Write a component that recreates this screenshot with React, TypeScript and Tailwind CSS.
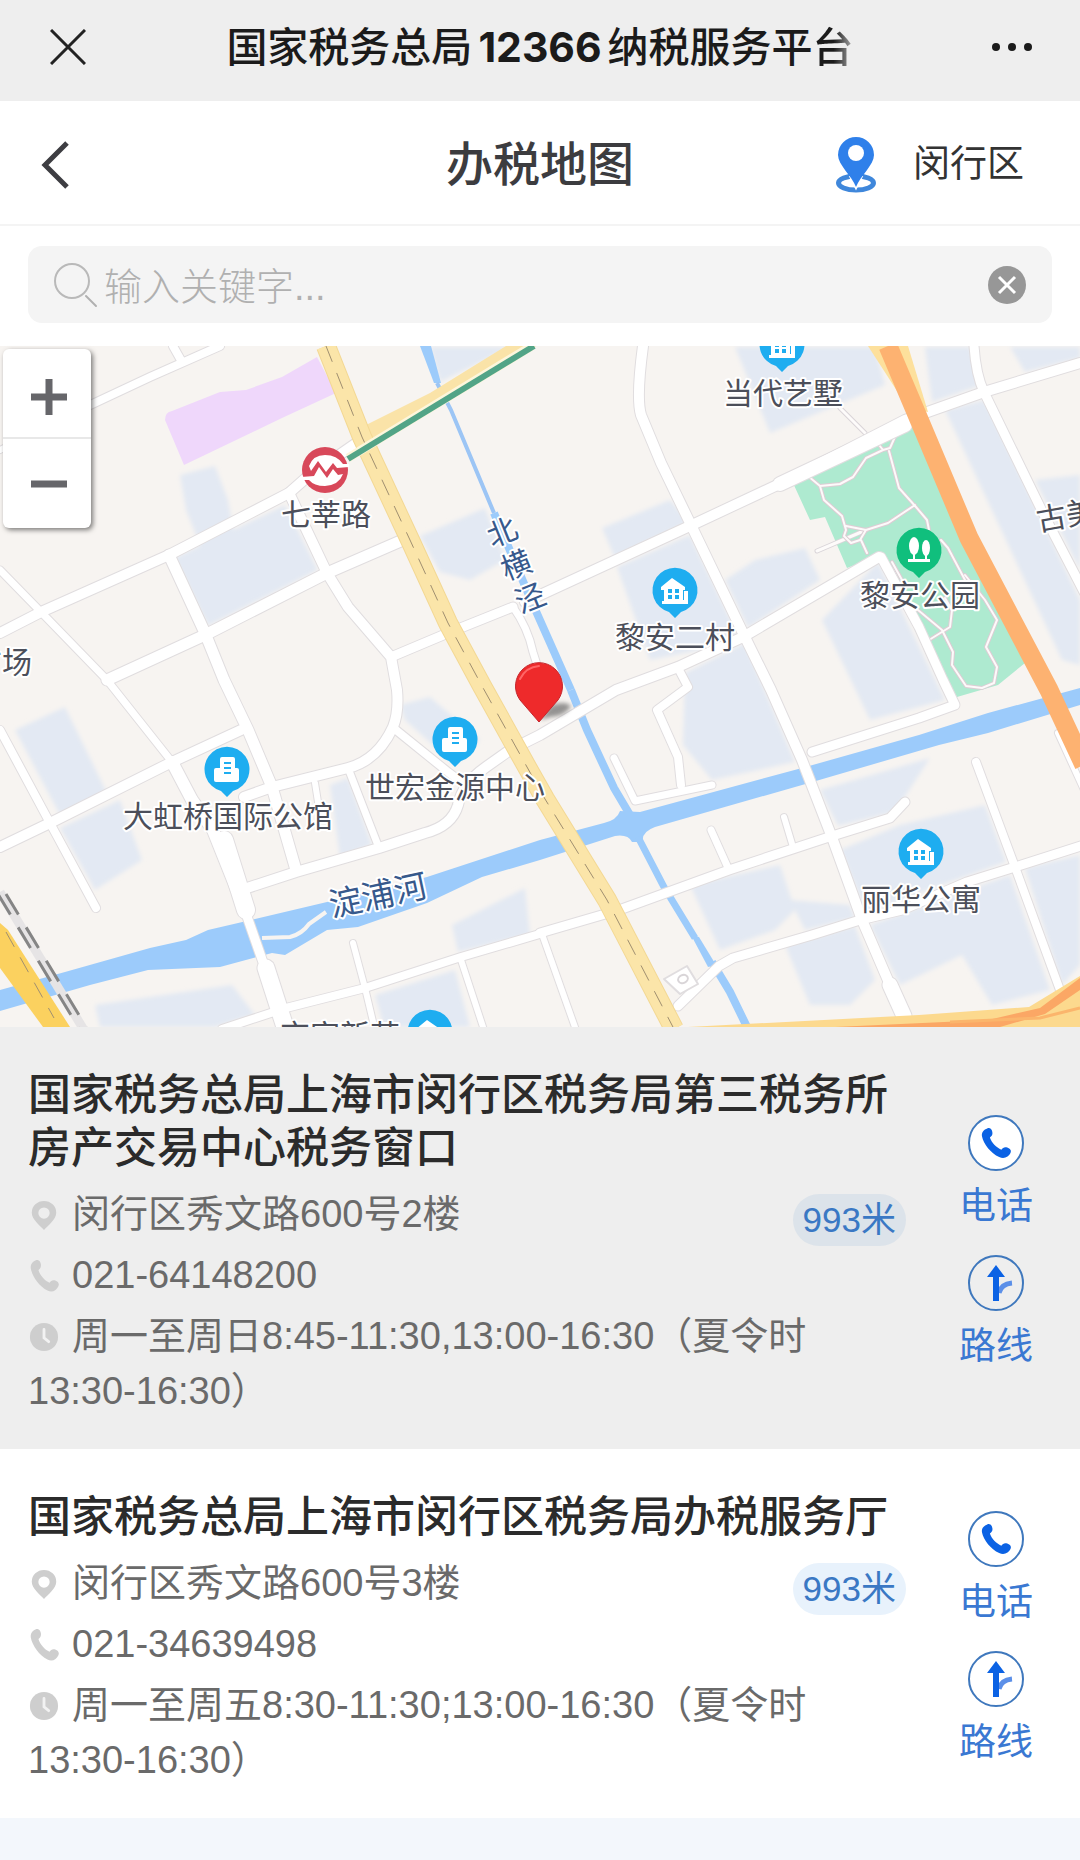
import React from "react";

const SANS = "font-['Liberation_Sans','Noto_Sans_CJK_SC',sans-serif]";

type Road = { d: string; w: number };

const roads: Road[] = [
  { d: "M86 407 L150 377 L220 346", w: 8 },
  { d: "M173 346 L182 362", w: 8 },
  { d: "M0 450 L8 446", w: 6 },
  { d: "M0 633 L41 612 L169 555 L289 493 L306 478 L358 442", w: 10 },
  { d: "M0 570 L41 612 L107 680 L172 762", w: 7 },
  { d: "M172 762 L192 800 L213 830 L243 905", w: 12 },
  { d: "M224 840 L246 910", w: 18 },
  { d: "M243 905 L265 968", w: 9 },
  { d: "M266 968 L285 1027", w: 17 },
  { d: "M169 555 L205 633 L224 680 L248 730 L272 787 L296 870", w: 11 },
  { d: "M107 680 L205 635 L327 573 L403 540", w: 11 },
  { d: "M289 493 L327 573 L348 607 L391 657 L397 690 Q399 712 393 727 Q378 760 348 768 L272 787 L244 797", w: 10 },
  { d: "M391 657 L448 633 L513 607", w: 9 },
  { d: "M513 607 Q528 628 533 652 L545 690", w: 7 },
  { d: "M525 602 L692 525 L788 480 L905 420 L984 392 L1080 363", w: 10 },
  { d: "M780 484 L905 425", w: 14 },
  { d: "M643 346 Q636 398 641 415 L661 463 L692 527 L743 633 L771 690 L802 760 L833 840 L862 920 L890 985", w: 10 },
  { d: "M890 985 L904 1016", w: 15 },
  { d: "M974 346 Q976 375 984 392 L1043 513 L1084 592", w: 9 },
  { d: "M812 752 L919 718 L955 705 L943 680 L919 627 L881 557", w: 9 },
  { d: "M879 557 L743 637 L678 667 L616 690 L540 735 L510 750 L486 767 Q462 784 458 805 Q452 826 425 833 L379 848 L296 872 L241 890", w: 10 },
  { d: "M678 668 L688 687 L657 710 L678 757 L681 785", w: 8 },
  { d: "M614 758 L635 801 L712 785", w: 7 },
  { d: "M540 933 L619 910 L729 870 L829 837 L890 818 L905 802", w: 9 },
  { d: "M711 830 L729 870", w: 7 },
  { d: "M784 817 L793 847", w: 6 },
  { d: "M543 933 L461 957 L365 988 L286 1008 L222 1029", w: 8 },
  { d: "M353 943 L365 988 L375 1030", w: 6 },
  { d: "M461 960 L484 1030", w: 6 },
  { d: "M543 937 L576 1030", w: 6 },
  { d: "M1084 845 L1015 867 L967 882 L902 910 L860 920 L812 935 L733 958 L719 966 L678 1006", w: 9 },
  { d: "M976 762 L1015 867 L1060 990", w: 8 },
  { d: "M1058 733 L1084 790", w: 6 },
  { d: "M0 730 L50 823 L96 908", w: 8 },
  { d: "M0 847 L50 823 L172 762 L241 730", w: 10 },
  { d: "M315 783 L318 802", w: 6 },
  { d: "M348 768 L379 848", w: 7 },
  { d: "M396 730 L448 772 L472 790", w: 8 },
];

const blocks: string[] = [
  "M180 475 L215 466 L228 500 L236 545 L200 545 L186 510Z",
  "M174 558 L285 505 L318 570 L208 626Z",
  "M430 347 L512 347 L440 382Z",
  "M420 536 L485 508 L505 560 L470 580 L440 572Z",
  "M15 730 L65 707 L108 795 L60 815Z",
  "M60 828 L120 800 L142 860 L95 890Z",
  "M400 705 L430 697 L480 740 L455 765 L405 720Z",
  "M330 785 L348 778 L372 845 L340 858Z",
  "M452 925 L525 888 L530 935 L458 952Z",
  "M95 1005 L232 985 L255 1015 L215 1027 L100 1027Z",
  "M375 995 L455 970 L470 1027 L384 1027Z",
  "M735 347 L875 347 L885 385 L770 433Z",
  "M602 528 L670 500 L690 522 L615 558Z",
  "M617 567 L690 535 L738 635 L700 650 L650 660Z",
  "M725 580 L755 560 L805 548 L820 580 L748 628Z",
  "M822 620 L878 562 L945 700 L870 720Z",
  "M685 673 L745 643 L795 762 L712 780 L683 745Z",
  "M925 347 L970 347 L982 385 L932 402Z",
  "M1010 347 L1080 347 L1080 358 L1025 372Z",
  "M945 410 L985 400 L1080 600 L1080 665 L1062 660Z",
  "M1035 480 L1080 475 L1080 570Z",
  "M820 790 L930 758 L895 812 L838 826Z",
  "M840 850 L900 825 L985 805 L1006 862 L866 912Z",
  "M690 885 L780 865 L795 910 L775 930 L720 950Z",
  "M790 900 L850 905 L855 918 L805 930Z",
  "M785 945 L855 926 L875 980 L850 1005 L810 1005Z",
  "M870 925 L1010 875 L1050 990 L992 1005 L962 955 L900 985Z",
  "M1025 868 L1080 855 L1080 965 L1062 985Z",
];

function Marker({ x, y, kind }: { x: number; y: number; kind: "house" | "tower" | "trees" }) {
  return (
    <g transform={`translate(${x} ${y})`}>
      <path
        d="M0 27 L-6 21 A22.500 22.500 0 1 1 6 21Z"
        fill={kind === "trees" ? "#10bf7d" : "#1eadf0"}
      />
      {kind === "house" && (
        <g>
          <path d="M-14 -4 L-3 -13 L10 -4 V-1 H8 V9 H9 V0 H13 V13 H-13 V10 H-11 V-1 H-14Z" fill="#fff" />
          <path d="M-7 -2h4v4h-4z M0 -2h4v4h-4z M-7 4h4v4h-4z M0 4h4v4h-4z" fill="#1eadf0" />
        </g>
      )}
      {kind === "tower" && (
        <g>
          <path d="M-7 -11 Q-7 -13 -5 -13 H6 Q8 -13 8 -11 V-2 H10 Q12 -2 12 0 V10 Q12 12 10 12 H-11 Q-13 12 -13 10 V0 Q-13 -2 -11 -2 H-7Z" fill="#fff" />
          <path d="M-3 -7h7 M-3 -2h7 M-3 3h7" stroke="#1eadf0" strokeWidth="2" />
        </g>
      )}
      {kind === "trees" && (
        <g fill="#fff">
          <ellipse cx="-5" cy="-5" rx="5" ry="9" />
          <ellipse cx="7" cy="-3" rx="4" ry="8" />
          <path d="M-6 2h2v7h-2z M6 2h2v7h-2z M-11 8h22v3h-22z" />
        </g>
      )}
    </g>
  );
}

const labels = [
  { t: "当代艺墅", x: 783, y: 404 },
  { t: "七莘路", x: 326, y: 525 },
  { t: "黎安二村", x: 675, y: 648 },
  { t: "黎安公园", x: 920, y: 606 },
  { t: "广场", x: 2, y: 673 },
  { t: "大虹桥国际公馆", x: 228, y: 827 },
  { t: "世宏金源中心", x: 455, y: 798 },
  { t: "丽华公寓", x: 921, y: 910 },
  { t: "京家新苑", x: 340, y: 1046 },
];

const MAIN_ROAD = "M326 346 L362 437 L410 540 L448 623 L482 686 L527 767 L545 799 L607 900 L674 1029";

const PARK_PATHS =
  "M876 441 L883 450 L890 448 L898 430 M889 451 L899 488 L916 507 L927 520 L929 530 M883 450 L866 458 L853 477 L840 484 L820 486 L808 476 M820 486 L824 500 L842 516 L846 530 L844 536 L851 543 L860 540 L866 530 L846 526 M866 530 L888 523 L915 505 M861 540 L867 553 M941 540 L948 548 L965 580 M965 575 L985 600 L997 620 L986 647 L997 667 L994 683 L982 688 L966 686 L952 665 L953 652 L942 630 L918 610 M929 640 L950 627 L952 610 L945 598 M892 562 L902 580";

function MapCanvas() {
  return (
    <svg viewBox="0 346 1080 681" className={`block h-auto w-full ${SANS}`} role="img" aria-label="办税地图">
      <defs>
        <filter id="pinShadow" x="-50%" y="-50%" width="200%" height="200%">
          <feGaussianBlur stdDeviation="2" />
        </filter>
        <filter id="blockEdge" x="-10%" y="-10%" width="120%" height="120%">
          <feGaussianBlur stdDeviation="2" />
        </filter>
      </defs>
      <rect x="0" y="346" width="1080" height="681" fill="#f7f4f1" />
      <g fill="#e3e9f3" filter="url(#blockEdge)">
        {blocks.map((d) => (
          <path key={d} d={d} />
        ))}
      </g>
      <path d="M165 420 Q165 412 172 411 L220 392 L246 390 L282 377 L317 357 L336 393 L282 418 L184 465Z" fill="#efd7fb" />
      <path d="M793 483 L905 424 L914 420 L1025 663 L998 685 L957 697 L929 650 L895 570 L881 555 L847 568 L825 517 L810 520Z" fill="#aeead0" />

      <g fill="#9ccbfb">
        <path d="M0 990 L65 972 L150 948 L186 940 L208 930 L251 920 L327 902 L427 877 L540 840 L604 823 Q617 820 620 811 L640 812 L802 768 L919 735 L988 713 L1080 688 V705 L988 733 L939 745 L809 783 L655 827 Q641 832 643 842 L632 842 Q628 834 615 836 L540 860 L482 877 L427 903 L358 927 L327 930 L285 955 L272 953 L220 967 L148 970 L90 985 L0 1011Z" />
        <path d="M420 346 L431 346 L441 383 L434 383Z" />
        <path d="M691 935 L699 937 L716 965 L708 967Z" />
      </g>
      <path d="M437 383 L451 410 L494 513" fill="none" stroke="#9cc5f5" strokeWidth="4" />
      <path d="M494 513 L531 600 L571 690" fill="none" stroke="#9ccbfb" strokeWidth="8" />
      <path d="M571 690 L587 730 L614 788 L630 815" fill="none" stroke="#9ccbfb" strokeWidth="8" />
      <path d="M638 837 L664 887 L695 938" fill="none" stroke="#9ccbfb" strokeWidth="7" />
      <path d="M712 962 L730 992 L748 1029" fill="none" stroke="#9ccbfb" strokeWidth="8" />
      <path d="M262 938 L290 937 Q302 934 309 924 L326 912" fill="none" stroke="#f7f4f1" strokeWidth="4" />

      <g fill="none" strokeLinecap="round" strokeLinejoin="round">
        <path d="M840 408 L865 433 M817 551 L866 530" stroke="#d9d4d8" strokeWidth="5" />
        <path d="M840 408 L865 433 M817 551 L866 530" stroke="#fdfbfa" strokeWidth="3" />
        <path d={PARK_PATHS} stroke="#dccdd4" strokeWidth="4" />
        <path d={PARK_PATHS} stroke="#fdfafa" strokeWidth="2" />
        {roads.map((r) => (
          <path key={r.d} d={r.d} stroke="#e0dddf" strokeWidth={r.w + 2} />
        ))}
        {roads.map((r) => (
          <path key={r.d} d={r.d} stroke="#fff" strokeWidth={r.w} />
        ))}
        <path d="M664 979 L687 966 L698 984 L680 994Z" fill="#fff" stroke="#e0dddf" strokeWidth="2" />
        <ellipse cx="683" cy="979" rx="5" ry="4" stroke="#d9d5d8" strokeWidth="2" transform="rotate(-25 683 979)" />
      </g>

      <path d="M362 427 L430 393 L506 346 L536 346 L372 448Z" fill="#fae3a8" />
      <path d={MAIN_ROAD} fill="none" stroke="#f3d894" strokeWidth="20" />
      <path d={MAIN_ROAD} fill="none" stroke="#fbe5a9" strokeWidth="18" />
      <path d={MAIN_ROAD} fill="none" stroke="#a08f70" strokeWidth="1" strokeDasharray="17 12" />
      <path d="M348 458 L532 346" stroke="#fdf6dc" strokeWidth="9" />
      <path d="M348 459 L534 346" stroke="#52a487" strokeWidth="6" />

      <path d="M868 346 L908 346 L928 412 L908 408Z" fill="#fde09c" />
      <path d="M888 346 L918 417 L969 538 L1049 690 L1084 765" fill="none" stroke="#fdb271" strokeWidth="19" strokeLinejoin="round" />

      <path d="M688 1027 L919 1015 L1029 1007 L1080 976 V1027Z" fill="#fcd98e" />
      <path d="M835 1027 L988 1020 L1040 1008 L1080 978 V990 L1045 1014 L1000 1027Z" fill="#fba765" />
      <path d="M950 1022 L1040 1018 L1080 1008" fill="none" stroke="#fbb56c" strokeWidth="3" />

      <path d="M0 923 L8 930 L70 1027 L43 1027 L0 968Z" fill="#fbd15f" />
      <path d="M6 932 L54 1018" stroke="#a08f70" strokeWidth="1" strokeDasharray="17 12" />
      <path d="M0 892 L84 1030" stroke="#e6e4e5" strokeWidth="9" />
      <path d="M-2 894 L80 1030" stroke="#858585" strokeWidth="3" strokeDasharray="24 15" />
      <path d="M6 894 L88 1030" stroke="#858585" strokeWidth="3" strokeDasharray="24 15" />

      <circle cx="325" cy="470" r="23" fill="#d8485a" />
      <path d="M309 466 Q313 455 325 455 Q337 455 343 464 L349 464 V467 L337 468 L333 463 L326 472 L318 461 L311 471Z" fill="#fff" />
      <path d="M301 477 L314 476 L319 467 L327 478 L333 469 L338 475 L343 474 Q339 485 325 486 Q314 486 309 480 L301 480Z" fill="#fff" />

      <g fontSize="30" textAnchor="middle" fill="#4c4f5a" stroke="#fff" strokeWidth="4" strokeLinejoin="round" style={{ paintOrder: "stroke" }}>
        {labels.map((l) => (
          <text key={l.t} x={l.x} y={l.y}>
            {l.t}
          </text>
        ))}
        <text x="1068" y="526" transform="rotate(-10 1068 526)">
          古美
        </text>
        <g fill="#37598c">
          <text x="502" y="543" transform="rotate(-22 502 532)">北</text>
          <text x="516" y="576" transform="rotate(-22 516 565)">横</text>
          <text x="530" y="609" transform="rotate(-22 530 598)">泾</text>
          <text x="378" y="907" fontSize="33" transform="rotate(-12 378 895)">
            淀浦河
          </text>
        </g>
      </g>

      <Marker x={782} y={345} kind="house" />
      <Marker x={675} y={591} kind="house" />
      <Marker x={921} y={852} kind="house" />
      <Marker x={919} y={551} kind="trees" />
      <Marker x={227} y={770} kind="tower" />
      <Marker x={455} y={740} kind="tower" />
      <Marker x={430} y={1033} kind="house" />

      <path d="M540 720 L550 706 Q564 700 571 706 Q566 716 550 717Z" fill="#6b6b6b" opacity="0.7" filter="url(#pinShadow)" />
      <path d="M539 722 L520 700 A23.500 23.500 0 1 1 558 700Z" fill="#ee2a2b" stroke="#c4262c" strokeWidth="1" />
      <path d="M520 679 Q526 667 539 666" fill="none" stroke="#f66" strokeWidth="2" strokeLinecap="round" />
    </svg>
  );
}

const PHONE =
  "M6.600 2.200 C8.200 1.500 9.500 2.600 9.900 4.500 C10.300 6.400 9.300 7.300 8.300 8.100 C9.300 11.300 12.500 14.600 15.700 15.900 C16.600 14.800 17.600 13.900 19.500 14.500 C21.400 15.100 22.400 16.400 21.600 18 C20.400 20.500 17.500 22.200 14.300 20.600 C8.900 18.200 4.200 12.200 3.200 7.200 C2.800 4.600 4.600 2.900 6.600 2.200Z";

function PinIcon() {
  return (
    <svg viewBox="0 0 30 34" className="h-8 w-[30px]" aria-hidden="true">
      <path d="M15 33 C11 28 2 22 2 14.500 A13 12.500 0 0 1 28 14.500 C28 22 19 28 15 33Z M15 9 A6 6 0 1 0 15 21 A6 6 0 1 0 15 9Z" fill="#cecece" fillRule="evenodd" />
    </svg>
  );
}

function PhoneIcon() {
  return (
    <svg viewBox="2 2 20 19.500" className="h-8 w-[30px]" preserveAspectRatio="none" aria-hidden="true">
      <path d={PHONE} fill="#cecece" />
    </svg>
  );
}

function ClockIcon() {
  return (
    <svg viewBox="-1 -2 32 34" className="h-8 w-[30px]" aria-hidden="true">
      <circle cx="15" cy="15" r="15" fill="#cecece" />
      <path d="M15 7 V16 L20 20" fill="none" stroke="#f2f2f2" strokeWidth="3" strokeLinecap="round" />
    </svg>
  );
}

function Row({ icon, children }: { icon: React.ReactNode; children: React.ReactNode }) {
  return (
    <p className="text-[38px] leading-[55px] text-[#6a6a6a]">
      <span className="mr-[13px] ml-px inline-block align-[-4px] leading-none">{icon}</span>
      {children}
    </p>
  );
}

type Office = {
  id: string;
  name: string;
  address: string;
  phone: string;
  hours: string;
  summerHours: string;
  distance: string;
  selected: boolean;
};

const offices: Office[] = [
  {
    id: "no3",
    name: "国家税务总局上海市闵行区税务局第三税务所房产交易中心税务窗口",
    address: "闵行区秀文路600号2楼",
    phone: "021-64148200",
    hours: "周一至周日8:45-11:30,13:00-16:30（夏令时",
    summerHours: "13:30-16:30）",
    distance: "993米",
    selected: true,
  },
  {
    id: "hall",
    name: "国家税务总局上海市闵行区税务局办税服务厅",
    address: "闵行区秀文路600号3楼",
    phone: "021-34639498",
    hours: "周一至周五8:30-11:30;13:00-16:30（夏令时",
    summerHours: "13:30-16:30）",
    distance: "993米",
    selected: false,
  },
];

const ACTION = "flex flex-col items-center gap-[10px] text-[37px] leading-[52px] text-[#3a78d2]";

function OfficeCard({ o }: { o: Office }) {
  return (
    <li className={`flex items-center pt-[42px] pb-[30px] pl-7 ${o.selected ? "bg-[#eeeeee]" : "bg-white"}`}>
      <div className="min-w-0 flex-1">
        <h2 className="text-[43px] leading-[53px] font-medium text-[#2b2b2b]">{o.name}</h2>
        <div className="mt-3 flex flex-col gap-[6px]">
          <div className="flex items-end justify-between">
            <Row icon={<PinIcon />}>{o.address}</Row>
            <span
              className={`-mb-1 rounded-[26px] px-[10px] text-[35px] leading-[52px] text-[#3a78c4] ${
                o.selected ? "bg-[#dce3ea]" : "bg-[#e8f2fc]"
              }`}
            >
              {o.distance}
            </span>
          </div>
          <Row icon={<PhoneIcon />}>{o.phone}</Row>
          <Row icon={<ClockIcon />}>
            {o.hours}
            <span className="inline-block">{o.summerHours}</span>
          </Row>
        </div>
      </div>
      <div className="ml-[6px] flex w-[168px] shrink-0 flex-col items-center gap-[22px]">
        <a href={`tel:${o.phone}`} className={ACTION}>
          <svg viewBox="0 0 56 56" className="size-14" aria-hidden="true">
            <circle cx="28" cy="28" r="27" fill="#fff" stroke="#3f78bd" strokeWidth="2" />
            <path d={PHONE} fill="#0b62e4" transform="translate(9 10) scale(1.550)" />
          </svg>
          电话
        </a>
        <a href={`#route-${o.id}`} className={ACTION}>
          <svg viewBox="0 0 56 56" className="size-14" aria-hidden="true">
            <circle cx="28" cy="28" r="27" fill="none" stroke="#3f78bd" strokeWidth="2" />
            <path d="M31 38 Q33 29 44 28" fill="none" stroke="#5b8fe8" strokeWidth="5" />
            <path d="M28 10 L37 22 H31 V46 H25 V22 H19Z" fill="#0b62e4" />
          </svg>
          路线
        </a>
      </div>
    </li>
  );
}

export default function App() {
  return (
    <div className={`min-h-screen bg-[#f3f7fc] ${SANS}`}>
      <div className="grid h-[101px] grid-cols-[64px_1fr_64px] items-center bg-[#eeeeee] px-9 pb-2">
        <button type="button" aria-label="关闭" className="flex size-16 items-center justify-center">
          <svg viewBox="0 0 36 36" className="size-9" aria-hidden="true">
            <path d="M1 1 L35 35 M35 1 L1 35" stroke="#222" strokeWidth="3" />
          </svg>
        </button>
        <h1 className="text-center font-['Inter','Noto_Sans_CJK_SC',sans-serif] text-[41px] leading-[56px] font-medium text-[#1b1b1b]">
          国家税务总局
          <span className="mx-[6px] font-bold">12366</span>
          纳税服务平
          <span className="bg-gradient-to-r from-[#1b1b1b] from-50% to-[#b5b5b5] bg-clip-text text-transparent">台</span>
        </h1>
        <button type="button" aria-label="更多" className="flex size-16 items-center justify-center">
          <svg viewBox="0 0 42 10" className="h-[10px] w-[42px]" aria-hidden="true">
            <g fill="#1b1b1b">
              <circle cx="5" cy="5" r="4" />
              <circle cx="21" cy="5" r="4" />
              <circle cx="37" cy="5" r="4" />
            </g>
          </svg>
        </button>
      </div>

      <header className="grid h-[125px] grid-cols-[1fr_auto_1fr] items-center border-b-2 border-[#f4f4f4] bg-white px-9 pt-1">
        <button type="button" aria-label="返回" className="flex size-12 items-center">
          <svg viewBox="0 0 34 48" className="h-12 w-[34px]" aria-hidden="true">
            <path d="M31 2 L9 24 L31 46" fill="none" stroke="#3d3d42" strokeWidth="5" />
          </svg>
        </button>
        <h2 className="text-[47px] leading-[60px] font-medium text-[#3c3c3f]">办税地图</h2>
        <button type="button" className="mr-5 flex items-center gap-9 justify-self-end text-[37px] leading-[52px] text-[#333]">
          <svg viewBox="0 0 42 58" className="h-[58px] w-[42px]" aria-hidden="true">
            <ellipse cx="21" cy="47" rx="17.500" ry="7" fill="none" stroke="#3f87db" strokeWidth="5" />
            <path d="M21 50 L17 42 L25 42Z" fill="#fff" stroke="#fff" strokeWidth="4" />
            <path d="M21 51 C17 40 3 29 3 19 A18 18 0 0 1 39 19 C39 29 25 40 21 51Z" fill="#2f80ea" />
            <circle cx="21" cy="17" r="8" fill="#fff" />
          </svg>
          闵行区
        </button>
      </header>

      <div className="bg-white px-7 pt-5 pb-[23px]">
        <label className="flex h-[77px] items-center rounded-[14px] bg-[#f4f4f4] pr-[26px] pl-6">
          <svg viewBox="0 0 48 48" className="size-12 shrink-0" aria-hidden="true">
            <circle cx="20" cy="20" r="17" fill="none" stroke="#b9b9b9" strokeWidth="2" />
            <path d="M34 35 L44 45" stroke="#b0b0b0" strokeWidth="2" strokeLinecap="round" />
          </svg>
          <input
            type="text"
            aria-label="输入关键字"
            placeholder="输入关键字..."
            className="ml-1 min-w-0 flex-1 bg-transparent pt-1 text-[38px] leading-[54px] font-light text-[#333] outline-none placeholder:text-[#b0b0b0]"
          />
          <button type="button" aria-label="清除" className="shrink-0">
            <svg viewBox="0 0 38 38" className="block size-[38px]" aria-hidden="true">
              <circle cx="19" cy="19" r="19" fill="#979797" />
              <path d="M11 11 L27 27 M27 11 L11 27" stroke="#fff" strokeWidth="3" />
            </svg>
          </button>
        </label>
      </div>

      <div className="relative">
        <MapCanvas />
        <div className="absolute top-[3px] left-[3px] flex w-[88px] flex-col rounded-md bg-white shadow-[2px_2px_5px_rgba(0,0,0,0.5)]">
          <button type="button" aria-label="放大" className="flex h-[90px] items-center justify-center border-b-2 border-[#e8e8e8] pt-2 pl-1">
            <svg viewBox="0 0 36 36" className="size-9" aria-hidden="true">
              <path d="M18 0 V36 M0 18 H36" stroke="#66666a" strokeWidth="7" />
            </svg>
          </button>
          <button type="button" aria-label="缩小" className="flex h-[89px] items-center justify-center pl-1">
            <svg viewBox="0 0 36 36" className="size-9" aria-hidden="true">
              <path d="M0 18 H36" stroke="#66666a" strokeWidth="7" />
            </svg>
          </button>
        </div>
      </div>

      <ul>
        {offices.map((o) => (
          <OfficeCard key={o.id} o={o} />
        ))}
      </ul>
    </div>
  );
}
